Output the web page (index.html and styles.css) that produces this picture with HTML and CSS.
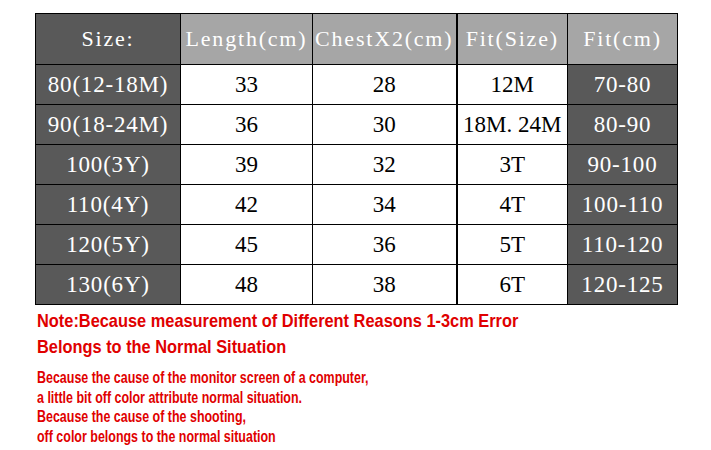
FILE: index.html
```html
<!DOCTYPE html>
<html>
<head>
<meta charset="utf-8">
<link rel="stylesheet" href="styles.css">
</head>
<body>
<div class="page">
  <table class="size-table">
    <colgroup>
      <col class="c1"><col class="c2"><col class="c3"><col class="c4"><col class="c5">
    </colgroup>
    <thead>
      <tr>
        <th class="dark">Size:</th>
        <th>Length(cm)</th>
        <th>ChestX2(cm)</th>
        <th class="thick">Fit(Size)</th>
        <th>Fit(cm)</th>
      </tr>
    </thead>
    <tbody>
      <tr><td class="dark">80(12-18M)</td><td>33</td><td>28</td><td class="thick">12M</td><td class="dark">70-80</td></tr>
      <tr><td class="dark">90(18-24M)</td><td>36</td><td>30</td><td class="thick">18M. 24M</td><td class="dark">80-90</td></tr>
      <tr><td class="dark">100(3Y)</td><td>39</td><td>32</td><td class="thick">3T</td><td class="dark">90-100</td></tr>
      <tr><td class="dark">110(4Y)</td><td>42</td><td>34</td><td class="thick">4T</td><td class="dark">100-110</td></tr>
      <tr><td class="dark">120(5Y)</td><td>45</td><td>36</td><td class="thick">5T</td><td class="dark">110-120</td></tr>
      <tr><td class="dark">130(6Y)</td><td>48</td><td>38</td><td class="thick">6T</td><td class="dark">120-125</td></tr>
    </tbody>
  </table>
  <div class="note">
    <p class="note-main">Note:Because measurement of Different Reasons 1-3cm Error<br>Belongs to the Normal Situation</p>
    <p class="note-sub">Because the cause of the monitor screen of a computer,<br>a little bit off color attribute normal situation.<br>Because the cause of the shooting,<br>off color belongs to the normal situation</p>
  </div>
</div>
</body>
</html>
```

FILE: styles.css
```css
html, body {
  margin: 0;
  padding: 0;
  background: #ffffff;
}
.page {
  padding: 13px 0 0 35px;
}
.size-table {
  border-collapse: collapse;
  table-layout: fixed;
  width: 642px;
  font-family: "Liberation Serif", "Times New Roman", serif;
}
.c1 { width: 145px; }
.c2 { width: 132px; }
.c3 { width: 144px; }
.c4 { width: 111px; }
.c5 { width: 110px; }
.size-table th,
.size-table td {
  border: 1px solid #000;
  padding: 0;
  text-align: center;
  white-space: nowrap;
  overflow: hidden;
}
.size-table th {
  height: 50px;
  background: #a6a6a6;
  color: #fff;
  font-weight: normal;
  font-size: 22px;
  letter-spacing: 1.8px;
}
.size-table td {
  height: 39px;
  background: #fff;
  color: #000;
  font-size: 23px;
}
.size-table .dark {
  background: #595959;
  color: #fff;
}
.size-table td.dark {
  letter-spacing: 0.8px;
}
.size-table .thick {
  border-left: 2px solid #000;
}
.note {
  padding-left: 2px;
  font-family: "Liberation Sans", Arial, sans-serif;
  color: #e00000;
  font-weight: bold;
}
.note p {
  margin: 0;
  white-space: nowrap;
  transform-origin: left top;
}
.note-main {
  margin-top: 3px !important;
  font-size: 18.5px;
  line-height: 26px;
  transform: scaleX(0.885);
}
.note-sub {
  margin-top: 8px !important;
  font-size: 16.3px;
  line-height: 19.7px;
  transform: scaleX(0.765);
}
```
